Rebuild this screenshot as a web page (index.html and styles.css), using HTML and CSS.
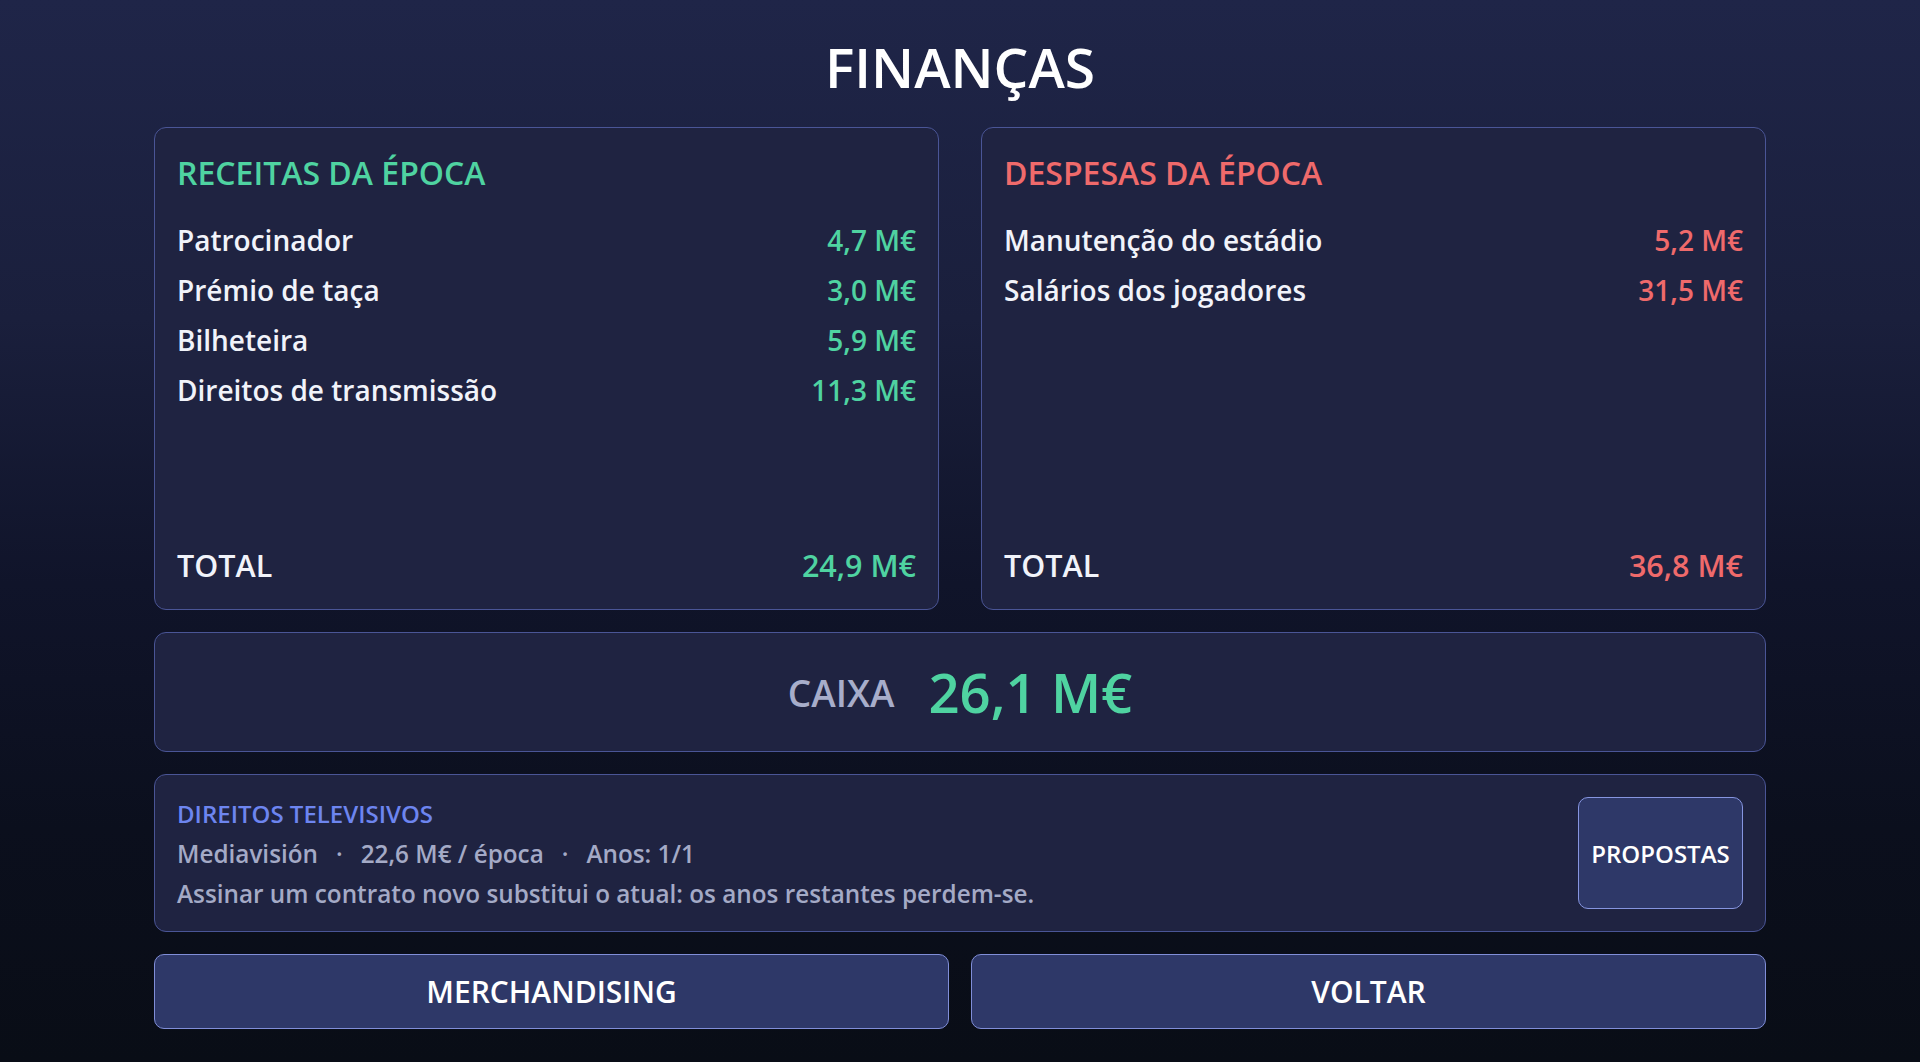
FILE: index.html
```html
<!DOCTYPE html>
<html>
<head>
<meta charset="utf-8">
<title>Finanças</title>
<link rel="stylesheet" href="styles.css">
</head>
<body>

<div class="page">
    <div class="pageTitle">FINANÇAS</div>

    <div class="ledgerRow">
        <div class="ledgerCard">
            <div class="cardTitle income">RECEITAS DA ÉPOCA</div>
            <div class="lineList">
                <div class="lineItem"><span>Patrocinador</span><span class="income">4,7 M€</span></div>
                <div class="lineItem"><span>Prémio de taça</span><span class="income">3,0 M€</span></div>
                <div class="lineItem"><span>Bilheteira</span><span class="income">5,9 M€</span></div>
                <div class="lineItem"><span>Direitos de transmissão</span><span class="income">11,3 M€</span></div>
            </div>
            <div class="totalLine"><span>TOTAL</span><span class="income">24,9 M€</span></div>
        </div>

        <div class="ledgerCard">
            <div class="cardTitle expense">DESPESAS DA ÉPOCA</div>
            <div class="lineList">
                <div class="lineItem"><span>Manutenção do estádio</span><span class="expense">5,2 M€</span></div>
                <div class="lineItem"><span>Salários dos jogadores</span><span class="expense">31,5 M€</span></div>
            </div>
            <div class="totalLine"><span>TOTAL</span><span class="expense">36,8 M€</span></div>
        </div>
    </div>

    <div class="cashBox">
        <span class="cashLabel">CAIXA</span>
        <span class="cashValue">26,1 M€</span>
    </div>

    <div class="tvBox">
        <div class="tvInfo">
            <div class="tvTitle">DIREITOS TELEVISIVOS</div>
            <div class="tvText">Mediavisión<span class="sep">·</span>22,6 M€ / época<span class="sep">·</span>Anos: 1/1</div>
            <div class="tvText">Assinar um contrato novo substitui o atual: os anos restantes perdem-se.</div>
        </div>
        <button class="offersBtn">PROPOSTAS</button>
    </div>

    <div class="buttonRow">
        <button class="bigBtn">MERCHANDISING</button>
        <button class="bigBtn">VOLTAR</button>
    </div>
</div>

</body>
</html>
```

FILE: styles.css
```css
html, body{
    margin:0;
    height:100%;
}
body{
    font-family:"Open Sans", "Noto Sans", sans-serif;
    font-weight:600;
    color:#f1f3fa;
    background:linear-gradient(180deg, #1f2548 0%, #1a1f3c 30%, #10142a 55%, #0b0f1d 78%, #090d16 100%);
}
.page{
    width:1612px;
    height:100vh;
    margin:0 auto;
    padding:29px 0 33px 0;
    box-sizing:border-box;
    display:flex;
    flex-direction:column;
    gap:22px;
}
.pageTitle{
    font-size:55px;
    text-align:center;
    color:#ffffff;
    line-height:76px;
}
.ledgerRow{
    flex:1;
    display:flex;
    gap:42px;
}
.ledgerCard{
    flex:1;
    background:#1f2341;
    border:1px solid #4a5596;
    border-radius:12px;
    padding:23px 22px 23px 22px;
    display:flex;
    flex-direction:column;
}
.cardTitle{
    font-size:32px;
    line-height:44px;
    margin-bottom:20px;
}
.income{
    color:#4fd3a1;
}
.expense{
    color:#ef6a6b;
}
.lineItem{
    display:flex;
    justify-content:space-between;
    font-size:28px;
    line-height:50px;
}
.lineItem span:first-child{
    color:#f1f3fa;
}
.totalLine{
    margin-top:auto;
    display:flex;
    justify-content:space-between;
    font-size:30.5px;
    line-height:41px;
}
.cashBox{
    height:120px;
    box-sizing:border-box;
    background:#1f2341;
    border:1px solid #4a5596;
    border-radius:12px;
    display:flex;
    align-items:center;
    justify-content:center;
    gap:34px;
}
.cashLabel{
    font-size:37px;
    color:#a7adca;
}
.cashValue{
    font-size:54.5px;
    color:#4fd3a1;
}
.tvBox{
    height:158px;
    box-sizing:border-box;
    background:#1f2341;
    border:1px solid #4a5596;
    border-radius:12px;
    padding:22px;
    display:flex;
    justify-content:space-between;
}
.tvInfo{
    display:flex;
    flex-direction:column;
    gap:7px;
}
.tvTitle{
    font-size:24px;
    color:#6d85ef;
}
.tvText{
    font-size:24.3px;
    color:#a4aac6;
}
.sep{
    margin:0 18px;
}
.offersBtn{
    width:165px;
    border:1px solid #8695e0;
    border-radius:10px;
    background:#2e3868;
    color:#ffffff;
    font-family:inherit;
    font-weight:600;
    font-size:24px;
    padding:0;
    cursor:pointer;
}
.buttonRow{
    height:75px;
    display:flex;
    gap:22px;
}
.bigBtn{
    flex:1;
    border:1px solid #808ed8;
    border-radius:10px;
    background:#2e3868;
    color:#ffffff;
    font-family:inherit;
    font-weight:600;
    font-size:30px;
    cursor:pointer;
}
```
